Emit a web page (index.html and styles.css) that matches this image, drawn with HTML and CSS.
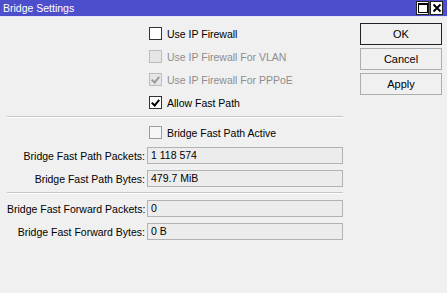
FILE: index.html
```html
<!DOCTYPE html>
<html lang="en">
<head>
    <meta charset="UTF-8">
    <title>Bridge Settings</title>
    <link rel="stylesheet" href="styles.css">
</head>
<body>
    <div class="window">
        <div class="titlebar">
            <span class="title">Bridge Settings</span>
            <span class="tb-btn">
                <svg width="10" height="10" viewBox="0 0 10 10"><rect x="0.5" y="0.5" width="9" height="9" fill="none" stroke="#000"/><rect x="0" y="0" width="10" height="2" fill="#000"/></svg>
            </span>
            <span class="tb-btn">
                <svg width="10" height="10" viewBox="0 0 10 10"><path d="M1.5 1.5 L8.5 8.5 M8.5 1.5 L1.5 8.5" stroke="#000" stroke-width="2"/></svg>
            </span>
        </div>

        <div class="content">
            <div class="form">
                <div class="row">
                    <span class="label"></span>
                    <label class="check"><span class="box"></span>Use IP Firewall</label>
                </div>
                <div class="row">
                    <span class="label"></span>
                    <label class="check disabled"><span class="box"></span>Use IP Firewall For VLAN</label>
                </div>
                <div class="row">
                    <span class="label"></span>
                    <label class="check disabled"><span class="box checked"></span>Use IP Firewall For PPPoE</label>
                </div>
                <div class="row">
                    <span class="label"></span>
                    <label class="check"><span class="box checked"></span>Allow Fast Path</label>
                </div>

                <div class="sep"></div>

                <div class="row">
                    <span class="label"></span>
                    <label class="check readonly"><span class="box"></span>Bridge Fast Path Active</label>
                </div>
                <div class="row">
                    <span class="label">Bridge Fast Path Packets:</span>
                    <div class="field">1 118 574</div>
                </div>
                <div class="row">
                    <span class="label">Bridge Fast Path Bytes:</span>
                    <div class="field">479.7 MiB</div>
                </div>

                <div class="sep"></div>

                <div class="row">
                    <span class="label">Bridge Fast Forward Packets:</span>
                    <div class="field">0</div>
                </div>
                <div class="row">
                    <span class="label">Bridge Fast Forward Bytes:</span>
                    <div class="field">0 B</div>
                </div>
            </div>

            <div class="buttons">
                <button class="btn default">OK</button>
                <button class="btn">Cancel</button>
                <button class="btn">Apply</button>
            </div>
        </div>
    </div>
</body>
</html>
```
FILE: styles.css
```css
body {
    margin: 0;
    font-family: "Liberation Sans", Arial, sans-serif;
    font-size: 10.5px;
    color: #000;
    background-color: #f0f0f0;
}
.window {
    width: 447px;
    height: 293px;
    background: #f0f0f0;
}
.titlebar {
    height: 17px;
    background: #4d4ecb;
    display: flex;
    align-items: center;
    padding: 0 4px 0 3px;
    border-bottom: 1px solid #e2e6f2;
    box-sizing: border-box;
}
.title {
    color: #fff;
    flex: 1;
    font-size: 10.5px;
}
.tb-btn {
    width: 13px;
    height: 14px;
    background: #fff;
    border: 1px solid #222;
    box-sizing: border-box;
    margin-left: 1px;
    display: flex;
    align-items: center;
    justify-content: center;
}
.content {
    display: flex;
    padding-top: 5px;
}
.form {
    width: 336px;
    margin-left: 7px;
}
.row {
    display: flex;
    align-items: center;
    height: 23px;
}
.label {
    width: 138px;
    text-align: right;
    padding-right: 2px;
    white-space: nowrap;
}
.check {
    display: flex;
    align-items: center;
    padding-left: 2px;
}
.box {
    width: 13px;
    height: 13px;
    box-sizing: border-box;
    border: 1px solid #333;
    background: #fff;
    margin-right: 5px;
    position: relative;
}
.box.checked::after {
    content: "";
    position: absolute;
    left: 3px;
    top: 1px;
    width: 3px;
    height: 6px;
    border: solid #000;
    border-width: 0 2px 2px 0;
    transform: rotate(40deg);
}
.check.disabled {
    color: #8d8d8d;
}
.check.disabled .box {
    border-color: #bcbcbc;
    background: #e6e6e6;
}
.check.disabled .box.checked::after {
    border-color: #9a9a9a;
}
.check.readonly .box {
    border-color: #9c9c9c;
    background: #f6f6f6;
}
.field {
    width: 196px;
    height: 17px;
    box-sizing: border-box;
    border: 1px solid #b2b2b2;
    background: #ececec;
    padding: 0 3px;
    line-height: 15px;
}
.sep {
    height: 0;
    border-top: 1px solid #c6c6c6;
    border-bottom: 1px solid #fff;
    margin: 2px 0 3px;
}
.buttons {
    display: flex;
    flex-direction: column;
    gap: 3px;
    margin-left: 17px;
    padding-top: 1px;
}
.btn {
    width: 82px;
    height: 22px;
    font-family: "Liberation Sans", Arial, sans-serif;
    font-size: 11px;
    color: #000;
    background: #f0f0f0;
    border: 1px solid #adadad;
    padding: 0;
}
.btn.default {
    border-color: #222;
}
```
